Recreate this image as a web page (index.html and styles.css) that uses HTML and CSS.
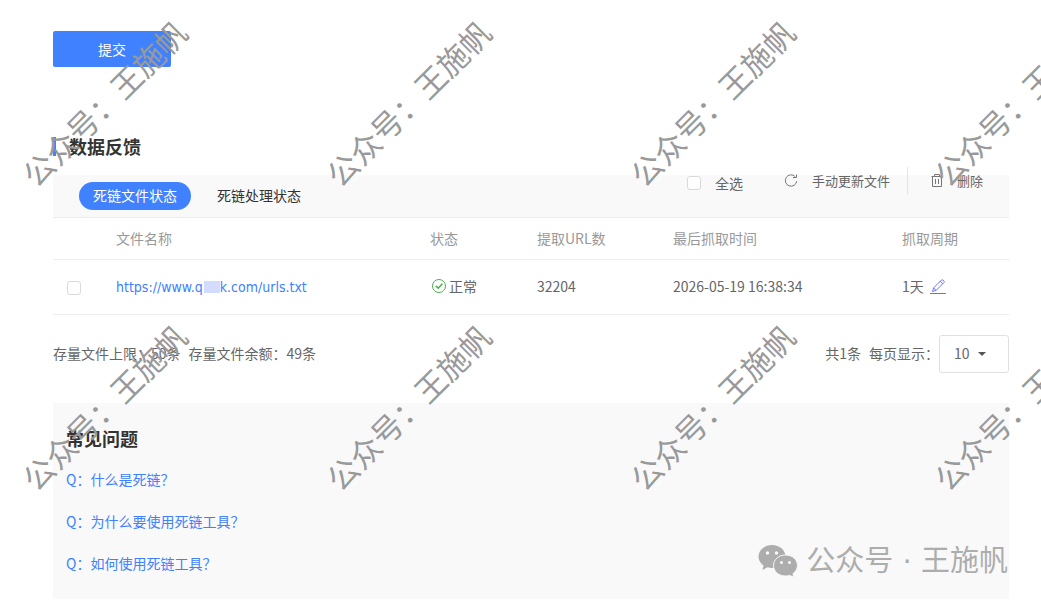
FILE: index.html
```
<!DOCTYPE html>
<html lang="zh-CN">
    <head>
        <meta charset="UTF-8">
        <meta name="viewport" content="width=device-width, initial-scale=1.0">
        <link rel="stylesheet" href="styles.css">
        <title>死链提交</title>
    </head>
    <body>
        <main class="page">
            <button class="submit-button" type="submit">提交</button>

            <h2 class="section-title">数据反馈</h2>

            <div class="toolbar">
                <div class="tabs">
                    <button class="tab selected" type="button">死链文件状态</button>
                    <button class="tab" type="button">死链处理状态</button>
                </div>
                <div class="actions">
                    <label class="select-all"><input class="checkbox" type="checkbox">全选</label>
                    <button class="action" type="button">
                        <svg width="14" height="14" viewBox="0 0 14 14" fill="none" stroke="#777">
                            <path d="M11.2 2.6A5.700 5.700 0 1 0 12.700 7.200M12.500 0.500V3.500H9"/>
                        </svg>
                        手动更新文件
                    </button>
                    <button class="action action-delete" type="button">
                        <svg width="12" height="14" viewBox="0 0 12 14" fill="none" stroke="#777">
                            <path d="M0.5 2.5H11.5M3.5 2.5V0.5H8.5V2.5M1.5 2.5V12.5H10.5V2.5M4.5 5V10M7.5 5V10"/>
                        </svg>
                        删除
                    </button>
                </div>
            </div>

            <table class="file-table">
                <colgroup>
                    <col class="col-check">
                    <col>
                    <col class="col-status">
                    <col class="col-count">
                    <col class="col-time">
                    <col class="col-cycle">
                </colgroup>
                <thead>
                    <tr>
                        <th></th>
                        <th>文件名称</th>
                        <th>状态</th>
                        <th>提取URL数</th>
                        <th>最后抓取时间</th>
                        <th>抓取周期</th>
                    </tr>
                </thead>
                <tbody>
                    <tr>
                        <td class="check-cell"><input class="checkbox" type="checkbox" aria-label="选择文件"></td>
                        <td><a class="file-link" href="#">https://www.q<span class="mask"></span>k.com/urls.txt</a></td>
                        <td>
                            <span class="status">
                                <svg width="14" height="14" viewBox="0 0 14 14" fill="none" stroke="#4caf50">
                                    <circle cx="7" cy="7" r="6.5"/>
                                    <path d="M3.8 7L6.2 9.2L10.4 4.8" stroke-width="1.6"/>
                                </svg>
                                正常
                            </span>
                        </td>
                        <td>32204</td>
                        <td>2026-05-19 16:38:34</td>
                        <td>
                            <span class="cycle">
                                1天
                                <a class="edit-link" href="#" aria-label="编辑">
                                    <svg width="14" height="14" viewBox="0 0 14 14" fill="none" stroke="#6b74ff">
                                        <path d="M1.5 12.5L2.6 8.9L10.4 1.1Q11.2 0.4 12 1.1L12.9 2Q13.6 2.8 12.9 3.6L5.1 11.4ZM9.2 2.3L11.7 4.8M2.6 8.9L5.1 11.4"/>
                                    </svg>
                                </a>
                            </span>
                        </td>
                    </tr>
                </tbody>
            </table>

            <div class="table-footer">
                <div class="quota">
                    <span>存量文件上限：50条</span>
                    <span>存量文件余额：49条</span>
                </div>
                <div class="pager">
                    <span class="total">共1条</span>
                    <label for="pageSize">每页显示：</label>
                    <div class="select-box">
                        <select id="pageSize">
                            <option>10</option>
                            <option>20</option>
                            <option>50</option>
                        </select>
                    </div>
                </div>
            </div>

            <section class="faq">
                <h2>常见问题</h2>
                <a href="#">Q：什么是死链？</a>
                <a href="#">Q：为什么要使用死链工具？</a>
                <a href="#">Q：如何使用死链工具？</a>
            </section>

            <div class="signature">
                <svg width="40" height="34" viewBox="0 0 40 34">
                    <path fill="#adadad" d="M14 1C6.500 1 0.500 6 0.500 12.500C0.500 16.200 2.400 19.300 5.500 21.500L4.500 26L9.500 23.300C11 23.700 12.500 24 14 24C21.500 24 27.500 19 27.500 12.500S21.500 1 14 1Z"/>
                    <path fill="#adadad" stroke="#f9f9f9" d="M27.500 11C20.500 11 15.500 15.700 15.500 21.500S20.500 32 27.500 32C29 32 30.500 31.800 31.700 31.400L35.700 33.300L35 29.600C37.700 27.700 39.500 24.900 39.500 21.500C39.500 15.700 34.500 11 27.500 11Z"/>
                    <g fill="#f9f9f9">
                        <circle cx="9.500" cy="9" r="1.700"/>
                        <circle cx="18.500" cy="9" r="1.700"/>
                        <circle cx="23.500" cy="18.500" r="1.500"/>
                        <circle cx="31.500" cy="18.500" r="1.500"/>
                    </g>
                </svg>
                <span>公众号 · 王施帆</span>
            </div>
        </main>

        <div class="watermark" aria-hidden="true">
            <span>公众号：王施帆</span>
            <span>公众号：王施帆</span>
            <span>公众号：王施帆</span>
            <span>公众号：王施帆</span>
            <span>公众号：王施帆</span>
            <span>公众号：王施帆</span>
            <span>公众号：王施帆</span>
            <span>公众号：王施帆</span>
        </div>
    </body>
</html>
```
FILE: styles.css
```
* {
    box-sizing: border-box;
}

body {
    margin: 0;
    position: relative;
    overflow-x: hidden;
    background: #fff;
    color: #666;
    font-family: "Noto Sans CJK SC", sans-serif;
    font-size: 14px;
    line-height: 20px;
}

button,
select {
    font-family: inherit;
    font-size: 14px;
    line-height: 20px;
    border: none;
    cursor: pointer;
}

a {
    color: #4081ff;
    text-decoration: none;
}

svg {
    flex-shrink: 0;
}

.page {
    position: relative;
    padding: 31px 32px 4px 53px;
}

.submit-button {
    display: block;
    width: 118px;
    height: 36px;
    padding: 0;
    border-radius: 2px;
    background: #4081ff;
    color: #fff;
}

.section-title {
    margin: 70px 0 19px;
    padding-left: 13px;
    border-left: 3px solid #4081ff;
    color: #333;
    font-size: 18px;
    line-height: 19px;
}

.toolbar {
    display: flex;
    justify-content: space-between;
    height: 43px;
    padding: 0 26px;
    background: #f9f9f9;
    border-bottom: 1px solid #eee;
}

.tabs {
    display: flex;
    align-items: center;
    gap: 12px;
}

.tab {
    height: 28px;
    padding: 0 14px 2px;
    border-radius: 14px;
    background: transparent;
    color: #333;
}

.tab.selected {
    background: #4081ff;
    color: #fff;
}

.actions {
    display: flex;
    align-items: center;
    height: 28px;
    margin-top: -8px;
}

.select-all {
    display: flex;
    align-items: center;
    gap: 14px;
    margin-right: 41px;
    padding-top: 4px;
}

.checkbox {
    appearance: none;
    display: block;
    width: 14px;
    height: 14px;
    margin: 0;
    border: 1px solid #d9d9d9;
    border-radius: 3px;
    background: #fff;
}

.action {
    display: flex;
    align-items: center;
    gap: 14px;
    height: 28px;
    padding: 0;
    background: transparent;
    color: #666;
    font-size: 13px;
}

.action-delete {
    margin-left: 17px;
    padding-left: 23px;
    border-left: 1px solid #e5e5e5;
}

.file-table {
    width: 100%;
    table-layout: fixed;
    border-collapse: separate;
    border-spacing: 0;
}

.col-check {
    width: 63px;
}

.col-status,
.col-cycle {
    width: 107px;
}

.col-count {
    width: 136px;
}

.col-time {
    width: 229px;
}

.file-table th,
.file-table td {
    padding: 0 0 2px;
    border-bottom: 1px solid #eee;
    text-align: left;
}

.file-table th {
    height: 42px;
    color: #999;
    font-weight: normal;
}

.file-table td {
    height: 55px;
}

.file-table .check-cell {
    padding: 2px 0 0 14px;
}

.file-link {
    font-family: "DejaVu Sans Condensed", "Noto Sans CJK SC", sans-serif;
}

.mask {
    display: inline-block;
    width: 16px;
    height: 12px;
    margin-left: 1px;
    background: #d3dbff;
    vertical-align: -1px;
}

.status,
.cycle {
    display: flex;
    align-items: center;
}

.status {
    gap: 3px;
    padding-left: 2px;
}

.cycle {
    gap: 6px;
}

.edit-link {
    display: flex;
    justify-content: center;
    width: 16px;
    border-bottom: 1px solid #4081ff;
}

.table-footer {
    display: flex;
    justify-content: space-between;
    align-items: center;
    margin: 20px 0 30px;
}

.quota,
.pager {
    display: flex;
    align-items: center;
}

.quota {
    gap: 8px;
    padding-bottom: 2px;
}

.pager .total {
    margin-right: 8px;
}

.pager .total,
.pager label {
    padding-bottom: 2px;
}

.select-box {
    position: relative;
}

.select-box::after {
    content: "";
    position: absolute;
    top: 17px;
    right: 23px;
    border: 4px solid transparent;
    border-top-color: #555;
    border-bottom: none;
    pointer-events: none;
}

.select-box select {
    appearance: none;
    display: block;
    width: 70px;
    height: 38px;
    padding: 0 14px 2px;
    border: 1px solid #e0e0e0;
    border-radius: 3px;
    background: #fff;
    color: #666;
}

.faq {
    display: flex;
    flex-direction: column;
    align-items: flex-start;
    padding: 15px 13px;
    background: #f9f9f9;
}

.faq h2 {
    margin: 0;
    color: #333;
    font-size: 18px;
    line-height: 40px;
}

.faq a {
    line-height: 42px;
}

/* account signature over the bottom right corner */
.signature {
    position: absolute;
    right: 33px;
    bottom: 22px;
    display: flex;
    align-items: center;
    gap: 8px;
    color: #adadad;
    font-family: "DejaVu Sans", "Noto Sans CJK SC", sans-serif;
    font-size: 29px;
    line-height: 40px;
}

/* diagonal watermark tiles */
.watermark {
    position: absolute;
    inset: 0;
    display: grid;
    grid-template-columns: repeat(4, 304px);
    grid-auto-rows: 304px;
    margin-left: -48px;
    overflow: hidden;
    pointer-events: none;
    color: #999;
    font-size: 31px;
}

.watermark span {
    height: 206px;
    line-height: 206px;
    text-align: center;
    white-space: nowrap;
    transform: rotate(-45deg);
}
```
